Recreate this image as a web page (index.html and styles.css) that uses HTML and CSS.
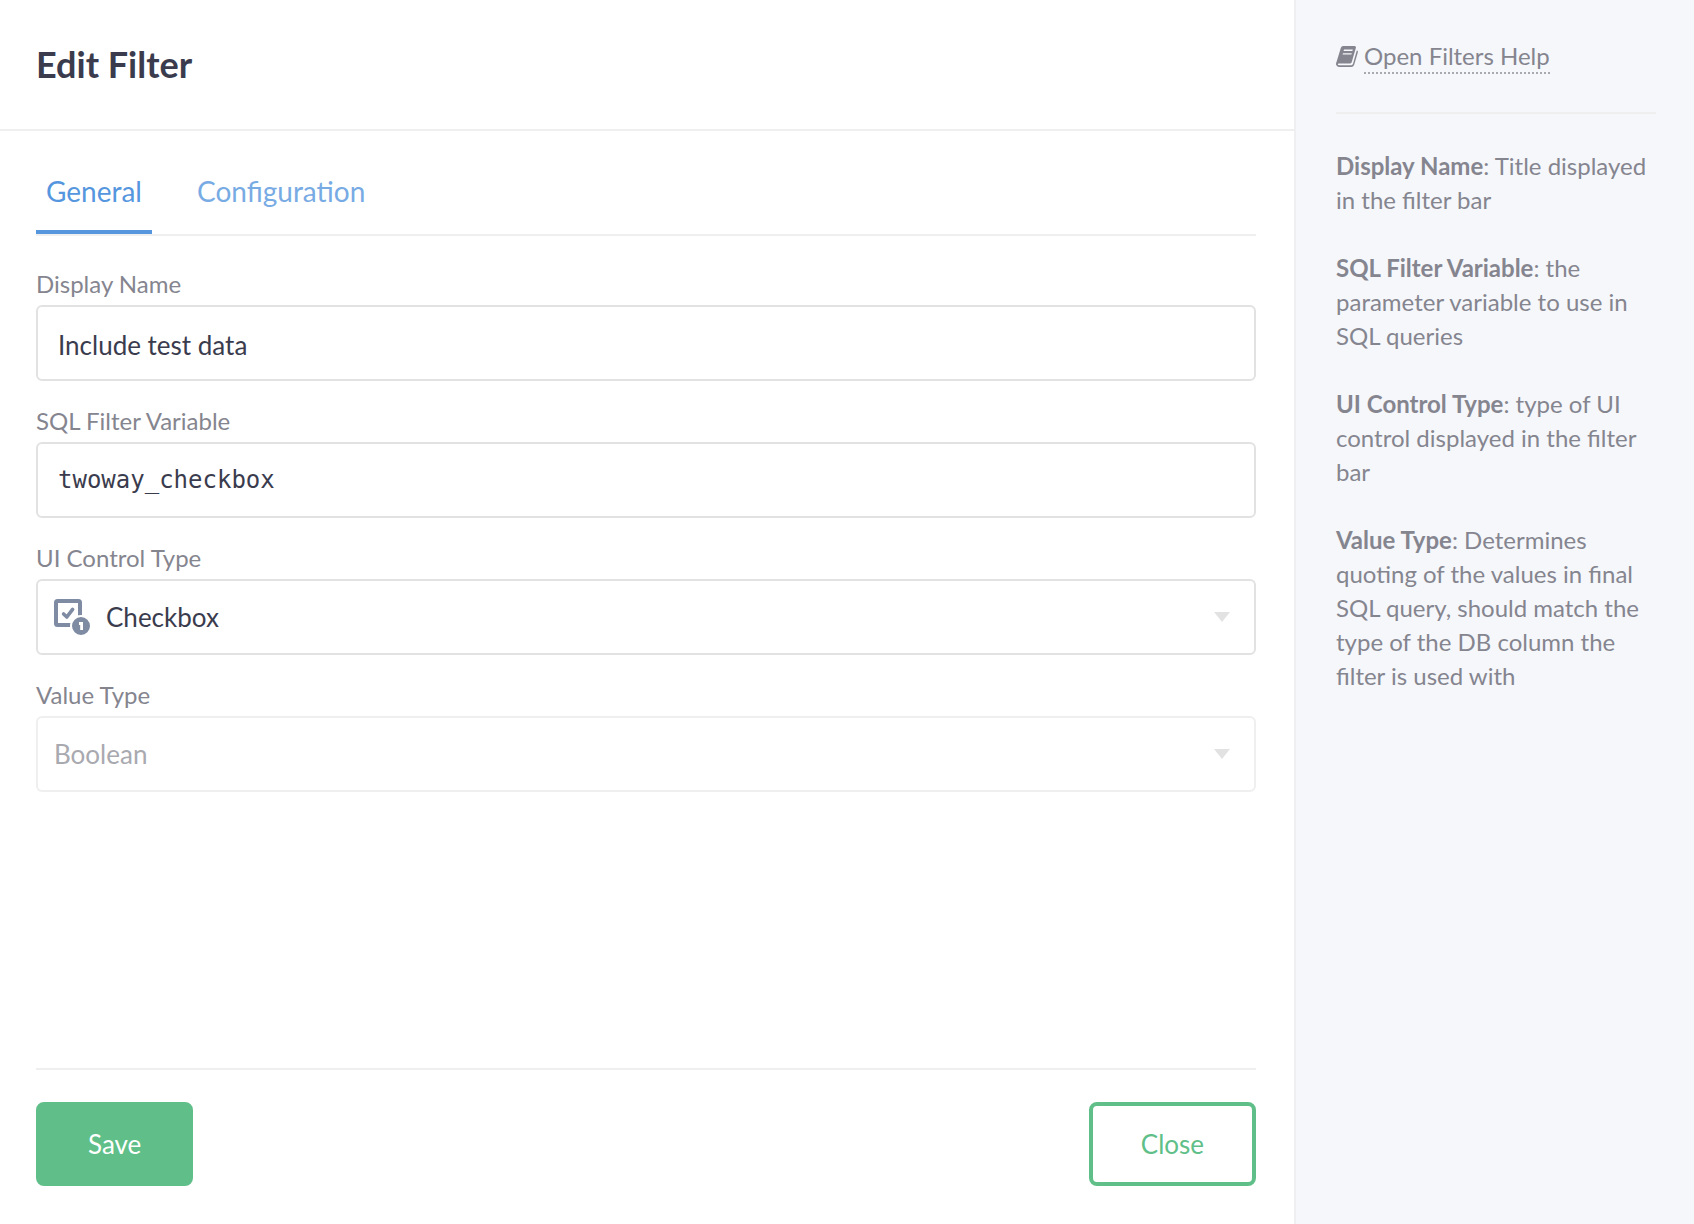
FILE: index.html
```html
<!DOCTYPE html>
<html lang="en">
<head>
<meta charset="utf-8">
<title>Edit Filter</title>
<link rel="stylesheet" href="styles.css">
</head>
<body>
<div class="dialog">
  <main class="editor">
    <header class="editor-header">
      <h1 class="title">Edit Filter</h1>
    </header>
    <form class="editor-body">
      <nav class="tabs">
        <a class="tab tab-active" href="#general">General</a>
        <a class="tab" href="#configuration">Configuration</a>
      </nav>
      <div class="fields">
        <div class="field">
          <label class="label" for="display-name">Display Name</label>
          <input class="control" id="display-name" type="text" value="Include test data">
        </div>
        <div class="field">
          <label class="label" for="variable">SQL Filter Variable</label>
          <input class="control control-code" id="variable" type="text" value="twoway_checkbox" spellcheck="false">
        </div>
        <div class="field">
          <label class="label" for="control-type">UI Control Type</label>
          <div class="select-wrap">
            <select class="control select select-with-icon" id="control-type">
              <option>Checkbox</option>
            </select>
            <svg class="type-icon" viewBox="0 0 36 36" aria-hidden="true">
              <rect x="2" y="2" width="24" height="24" rx="1.5" fill="none" stroke="#7f8ba3" stroke-width="4"/>
              <path d="M9.6 15 L12.8 18 L18.6 10.4" fill="none" stroke="#7f8ba3" stroke-width="3.6" stroke-linecap="round" stroke-linejoin="round"/>
              <circle cx="27" cy="27" r="10" fill="#7f8ba3" stroke="#fff" stroke-width="2"/>
              <path d="M25 24.5 H27.6 V31" fill="none" stroke="#fff" stroke-width="2.8"/>
            </svg>
            <svg class="caret" viewBox="0 0 16 10" aria-hidden="true"><path d="M0 0H16L8 10Z" fill="#e2e2e2"/></svg>
          </div>
        </div>
        <div class="field">
          <label class="label" for="value-type">Value Type</label>
          <div class="select-wrap">
            <select class="control select" id="value-type" disabled>
              <option>Boolean</option>
            </select>
            <svg class="caret" viewBox="0 0 16 10" aria-hidden="true"><path d="M0 0H16L8 10Z" fill="#e2e2e2"/></svg>
          </div>
        </div>
      </div>
      <footer class="actions">
        <button class="button button-primary" type="submit">Save</button>
        <button class="button" type="button">Close</button>
      </footer>
    </form>
  </main>
  <aside class="help">
    <div class="help-top">
      <svg class="book" viewBox="0 0 22 22" aria-hidden="true">
        <path fill="#85858f" fill-rule="evenodd" d="M7.2 0H18.6Q20.3 .2 19.9 1.8L15.7 16.2Q15.2 17.6 13.8 17.6H2.8Q1.6 17.8 1.8 18.5Q2 19.2 3.2 19.2H15.4Q16.6 19 17 17.8L20.8 4.6Q22.3 4.8 21.8 6.4L18.2 18.8Q17.4 21 15.2 21H3Q.6 21 0 18.6Q-.1 17.2 .6 15.8L4.8 2Q5.4 .2 7.2 0ZM8 3.6L7.6 5H16.4L16.8 3.6ZM7 7.2L6.6 8.6H15.4L15.8 7.2Z"/>
      </svg>
      <a class="help-link" href="#help">Open Filters Help</a>
    </div>
    <div class="help-text">
      <p><strong>Display Name</strong>: Title displayed in the filter bar</p>
      <p><strong>SQL Filter Variable</strong>: the parameter variable to use in SQL queries</p>
      <p><strong>UI Control Type</strong>: type of UI control displayed in the filter bar</p>
      <p><strong>Value Type</strong>: Determines quoting of the values in final SQL query, should match the type of the DB column the filter is used with</p>
    </div>
  </aside>
</div>
</body>
</html>
```
FILE: styles.css
```css
* {
  box-sizing: border-box;
}

body {
  margin: 0;
  background: #fff;
  color: #3a3c4e;
  font: 24px/34px Lato, "Liberation Sans", sans-serif;
}

.dialog {
  display: flex;
  min-height: 100vh;
}

.editor {
  flex: 1;
  min-width: 0;
  display: flex;
  flex-direction: column;
}

.editor-header {
  padding: 42px 36px;
  border-bottom: 2px solid #efefef;
}

.title {
  margin: 0;
  font-size: 36px;
  line-height: 45px;
  font-weight: 700;
}

.editor-body {
  flex: 1;
  display: flex;
  flex-direction: column;
  padding: 28px 38px 38px 36px;
}

.tabs {
  display: flex;
  gap: 35px;
  border-bottom: 2px solid #efefef;
}

.tab {
  padding: 14px 10px 21px;
  border-bottom: 4px solid transparent;
  color: #78abe4;
  font-size: 28px;
  line-height: 36px;
  text-decoration: none;
}

.tab-active {
  border-bottom-color: #5596de;
  color: #5596de;
}

.fields {
  flex: 1;
  display: flex;
  flex-direction: column;
  gap: 23px;
  padding: 31px 0;
}

.field {
  display: flex;
  flex-direction: column;
  gap: 4px;
}

.label {
  color: #85858f;
}

.control {
  width: 100%;
  height: 76px;
  padding: 4px 20px 0;
  border: 2px solid #e2e2e2;
  border-radius: 6px;
  background: #fff;
  color: #3a3c4e;
  font: inherit;
  font-size: 26px;
}

.control-code {
  padding: 0 20px;
  font-family: "DejaVu Sans Mono", monospace;
  font-size: 24px;
}

.select-wrap {
  display: grid;
  align-items: center;
}

.select-wrap > * {
  grid-area: 1 / 1;
}

.select {
  appearance: none;
  padding: 0 60px 0 16px;
}

.select-with-icon {
  padding-left: 68px;
}

.select:disabled {
  border-color: #efefef;
  color: #a9a9b0;
  opacity: 1;
}

.type-icon {
  width: 36px;
  height: 36px;
  margin-left: 18px;
  pointer-events: none;
}

.caret {
  width: 16px;
  height: 10px;
  margin-right: 26px;
  justify-self: end;
  pointer-events: none;
}

.actions {
  display: flex;
  justify-content: space-between;
  padding-top: 32px;
  border-top: 2px solid #efefef;
}

.button {
  height: 84px;
  padding: 0 48px;
  border: 4px solid #60bf88;
  border-radius: 8px;
  background: #fff;
  color: #60bf88;
  font: inherit;
  font-size: 26px;
}

.button-primary {
  background: #60bf88;
  color: #fff;
}

.help {
  flex: 0 0 400px;
  padding: 40px 38px 38px 40px;
  border-left: 2px solid #efeff1;
  background: #f5f7fb;
  color: #85858f;
}

.help-top {
  display: flex;
  align-items: flex-start;
  gap: 6px;
  padding-bottom: 38px;
  border-bottom: 2px solid #efefef;
}

.book {
  width: 22px;
  height: 22px;
  margin-top: 6px;
}

.help-link {
  border-bottom: 2px dotted #a9a9b0;
  color: inherit;
  line-height: 32px;
  text-decoration: none;
}

.help-text {
  padding-top: 35px;
}

.help-text p {
  margin: 0 0 34px;
}
```
